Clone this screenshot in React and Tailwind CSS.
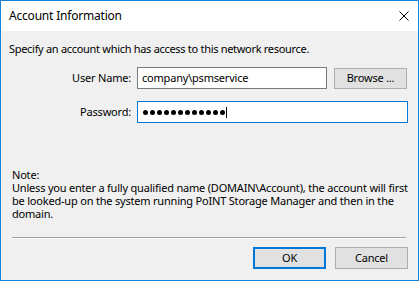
import React from 'react';

function Dots({ count }) {
  return (
    <div className="flex items-center gap-[2px]">
      {Array.from({ length: count }).map((_, i) => (
        <span key={i} className="block w-[5px] h-[5px] rounded-full bg-black" />
      ))}
    </div>
  );
}

export default function App() {
  return (
    <div className="w-[419px] h-[281px] border border-[#1883d7] bg-[#f0f0f0] flex flex-col text-black font-['Noto_Sans',sans-serif]">
      {/* title bar */}
      <div className="h-[30px] bg-white flex items-center justify-between pl-[8px] pr-[9px] shrink-0">
        <span className="text-[12px] leading-[16px] mt-[-1px] tracking-[-0.2px]">Account Information</span>
        <svg width="10" height="10" viewBox="0 0 10 10" className="mt-[-1px]">
          <path d="M0.5 0.5 L9.5 9.5 M9.5 0.5 L0.5 9.5" stroke="#000" strokeWidth="1" />
        </svg>
      </div>

      <div className="flex flex-col flex-1 text-[11px] tracking-[-0.2px]">
        <p className="pl-[8px] mt-[10px] leading-[16px] tracking-[-0.3px]">
          Specify an account which has access to this network resource.
        </p>

        {/* user name */}
        <div className="flex items-center mt-[10px]">
          <label className="w-[130px] text-right leading-[16px]">User Name:</label>
          <div className="ml-[6px] w-[190px] h-[22px] border border-[#7a7a7a] bg-white flex items-center pl-[4px] leading-[16px]">
            company\psmservice
          </div>
          <button className="ml-[7px] w-[73px] h-[21px] border border-[#adadad] bg-[#e1e1e1] flex items-center justify-center leading-[16px]">
            Browse ...
          </button>
        </div>

        {/* password */}
        <div className="flex items-center mt-[12px]">
          <label className="w-[130px] text-right leading-[16px]">Password:</label>
          <div className="ml-[6px] w-[271px] h-[22px] border border-[#0078d7] bg-white flex items-center pl-[5px]">
            <Dots count={12} />
            <span className="block w-[1px] h-[11px] bg-black ml-[1px]" />
          </div>
        </div>

        {/* note */}
        <p className="pl-[11px] pr-[10px] mt-[45px] leading-[13px]">
          Note:
          <br />
          Unless you enter a fully qualified name (DOMAIN\Account), the account will first be
          looked-up on the system running PoINT Storage Manager and then in the domain.
        </p>

        {/* separator */}
        <div className="mt-auto ml-[11px] mr-[12px] border-t border-[#a0a0a0] border-b border-b-white" />

        {/* buttons */}
        <div className="flex justify-end gap-[9px] pr-[10px] mt-[8px] mb-[11px]">
          <button className="w-[73px] h-[22px] border-2 border-[#0078d7] bg-[#e1e1e1] flex items-center justify-center leading-[16px]">
            OK
          </button>
          <button className="w-[73px] h-[22px] border border-[#adadad] bg-[#e1e1e1] flex items-center justify-center leading-[16px]">
            Cancel
          </button>
        </div>
      </div>
    </div>
  );
}
